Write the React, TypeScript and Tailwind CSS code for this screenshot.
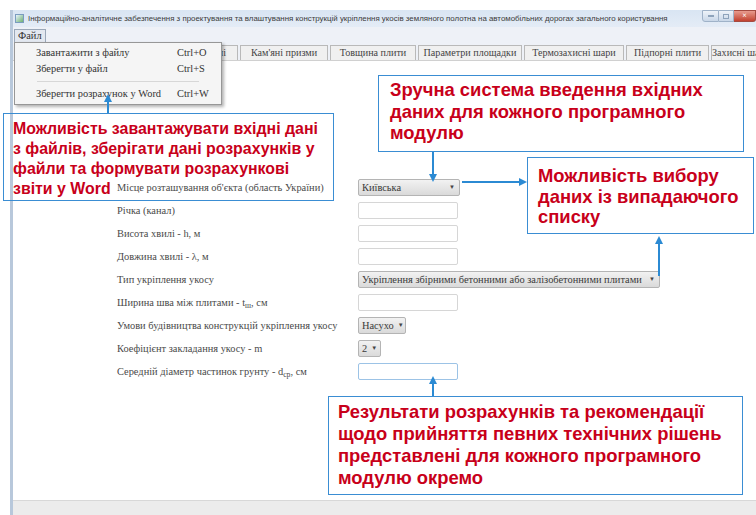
import React from "react";

type Tab = { label: string; w: string };

const tabs: Tab[] = [
  { label: "Загальні дані", w: "w-[78px]" },
  { label: "Габіони", w: "w-[56px]" },
  { label: "Геосинтетичні", w: "w-[86px]" },
  { label: "Кам'яні призми", w: "w-[88px]" },
  { label: "Товщина плити", w: "w-[86px]" },
  { label: "Параметри площадки", w: "w-[104px]" },
  { label: "Термозахисні шари", w: "w-[100px]" },
  { label: "Підпорні плити", w: "w-[83px]" },
  { label: "Захисні шари", w: "w-[60px]" },
];

const Field: React.FC<{ focused?: boolean }> = ({ focused }) => (
  <div
    className={`h-[17px] w-[100px] rounded-[2px] border bg-white ${
      focused ? "border-[#9cc3e6]" : "border-[#d6d6d6]"
    }`}
  />
);

const Combo: React.FC<{ value: string; className: string }> = ({ value, className }) => (
  <div
    className={`flex h-[17px] items-center justify-between gap-1 overflow-hidden whitespace-nowrap rounded-[2px] border border-[#b4b4b4] bg-linear-to-b from-[#f2f2f2] to-[#dadada] pl-[3px] pr-[4px] text-[10.4px] text-[#3a3a3a] ${className}`}
  >
    <span>{value}</span>
    <span className="text-[6px] text-[#444]">▼</span>
  </div>
);

const rows: { label: React.ReactNode; control: React.ReactNode }[] = [
  {
    label: "Місце розташування об'єкта (область України)",
    control: <Combo value="Київська" className="w-[102px]" />,
  },
  { label: "Річка (канал)", control: <Field /> },
  { label: "Висота хвилі - h, м", control: <Field /> },
  { label: "Довжина хвилі - λ, м", control: <Field /> },
  {
    label: "Тип укріплення укосу",
    control: (
      <Combo
        value="Укріплення збірними бетонними або залізобетонними плитами"
        className="w-[302px]"
      />
    ),
  },
  {
    label: (
      <>
        Ширина шва між плитами - t<sub>ш</sub>, см
      </>
    ),
    control: <Field />,
  },
  {
    label: "Умови будівництва конструкцій укріплення укосу",
    control: <Combo value="Насухо" className="w-[48px]" />,
  },
  {
    label: "Коефіцієнт закладання укосу - m",
    control: <Combo value="2" className="w-[23px]" />,
  },
  {
    label: (
      <>
        Середній діаметр частинок грунту - d<sub>ср</sub>, см
      </>
    ),
    control: <Field focused />,
  },
];

const menuItems = [
  { label: "Завантажити з файлу", key: "Ctrl+O" },
  { label: "Зберегти у файл", key: "Ctrl+S" },
  { label: "Зберегти розрахунок у Word", key: "Ctrl+W", sep: true },
];

const Callout: React.FC<{ className: string; lines: string[] }> = ({ className, lines }) => (
  <div
    className={`absolute border-[1.5px] border-[#3a8dd3] font-['Liberation_Sans',Arial,sans-serif] font-bold text-[#c8001a] ${className}`}
  >
    {lines.map((l) => (
      <div key={l} className="whitespace-nowrap">
        {l}
      </div>
    ))}
  </div>
);

const Arrows: React.FC = () => (
  <svg className="pointer-events-none absolute left-0 top-0" width={756} height={515}>
    <g stroke="#2b8ad3" strokeWidth={2}>
      <line x1={108} y1={113} x2={108} y2={101} />
      <line x1={433} y1={152} x2={433} y2={175} />
      <line x1={462} y1={182} x2={520} y2={182} />
      <line x1={659} y1={276} x2={659} y2={243} />
      <line x1={433} y1={396} x2={433} y2={383} />
    </g>
    <g fill="#2b8ad3">
      <polygon points="108,94 104,102 112,102" />
      <polygon points="433,182 429,174 437,174" />
      <polygon points="527,182 519,178 519,186" />
      <polygon points="659,236 655,244 663,244" />
      <polygon points="433,376 429,384 437,384" />
    </g>
  </svg>
);

export default function App() {
  return (
    <div className="relative h-[515px] w-[756px] overflow-hidden bg-white font-['Liberation_Serif',serif] text-[#4a4a4a]">
      <div className="ml-[10px] mt-[10px] flex h-[505px] flex-col border-l-[3px] border-[#b8c8db]">
        {/* title bar */}
        <div className="flex h-[17px] items-center bg-linear-to-b from-[#d9e5f3] to-[#e4ecf6] pl-[2px]">
          <div className="mr-[4px] h-[9px] w-[9px] border border-[#7a9cbf] bg-linear-to-br from-[#e8f4ff] to-[#6fb070]" />
          <span className="flex-1 truncate font-['Liberation_Sans',sans-serif] text-[7.9px] text-[#3b3b3b]">
            Інформаційно-аналітичне забезпечення з проектування та влаштування конструкцій укріплення
            укосів земляного полотна на автомобільних дорогах загального користування
          </span>
          <div className="ml-[10px] flex h-[12px] self-start">
            <div className="flex w-[17px] items-center justify-center rounded-bl-[3px] border border-[#9fb2c8] bg-linear-to-b from-[#eef3f9] to-[#c9d7e8]">
              <div className="h-[2px] w-[6px] bg-[#8ea3bb]" />
            </div>
            <div className="flex w-[15px] items-center justify-center border border-l-0 border-[#9fb2c8] bg-linear-to-b from-[#eef3f9] to-[#c9d7e8]">
              <div className="h-[5px] w-[6px] border border-[#8ea3bb]" />
            </div>
            <div className="flex w-[22px] items-center justify-center rounded-br-[3px] border border-l-0 border-[#a44a40] bg-linear-to-b from-[#e79a8e] to-[#c2402f] text-[8px] font-bold leading-none text-white">
              ×
            </div>
          </div>
        </div>

        {/* menu bar */}
        <div className="flex h-[16px] items-end bg-[#eef1f7] pl-px">
          <div className="flex h-[14px] items-center border border-[#9aa7b8] bg-[#e3e8f0] px-[3px] text-[10.4px] text-[#333]">
            Файл
          </div>
        </div>

        {/* tab strip */}
        <div className="flex h-[17px] gap-[2px] overflow-hidden bg-[#eef1f7] pl-px pt-[2px]">
          {tabs.map((t) => (
            <div
              key={t.label}
              className={`flex shrink-0 items-center justify-center overflow-hidden whitespace-nowrap border border-b-0 border-[#b9b9b9] bg-[#f0f0f0] text-[10.1px] text-[#444] ${t.w}`}
            >
              {t.label}
            </div>
          ))}
        </div>

        {/* form */}
        <div className="flex-1 border-t border-[#d0d0d0] bg-white">
          <div className="grid grid-cols-[241px_auto] auto-rows-[23px] items-center pl-[104px] pt-[115px] text-[10.4px]">
            {rows.map((r, i) => (
              <React.Fragment key={i}>
                <div className="whitespace-nowrap">{r.label}</div>
                <div>{r.control}</div>
              </React.Fragment>
            ))}
          </div>
        </div>

        {/* status bar */}
        <div className="h-[15px] border-t border-[#d8d8d8] bg-[#ececec]" />
      </div>

      {/* open File menu */}
      <div className="absolute left-[14px] top-[42px] flex w-[208px] flex-col border border-[#979797] bg-[#f5f5f5] py-[2px] text-[10.4px] text-[#333] shadow-[2px_2px_3px_rgba(0,0,0,0.3)]">
        {menuItems.map((m) => (
          <React.Fragment key={m.key}>
            {m.sep && <div className="mx-[22px] my-[4px] h-px bg-[#d7d7d7]" />}
            <div className="flex h-[16px] items-center pl-[21px]">
              <span className="w-[141px]">{m.label}</span>
              <span>{m.key}</span>
            </div>
          </React.Fragment>
        ))}
      </div>

      <Callout
        className="left-[3px] top-[113px] h-[88px] w-[331px] pl-[9px] pt-[5px] text-[15.9px] leading-[20px]"
        lines={[
          "Можливість завантажувати вхідні дані",
          "з файлів, зберігати дані розрахунків у",
          "файли та формувати розрахункові",
          "звіти у Word",
        ]}
      />
      <Callout
        className="left-[378px] top-[75px] h-[77px] w-[366px] pl-[11px] pt-[3px] text-[18.4px] leading-[21.5px]"
        lines={["Зручна система введення вхідних", "даних для кожного програмного", "модулю"]}
      />
      <Callout
        className="left-[527px] top-[157px] h-[77px] w-[227px] pl-[10px] pt-[8px] text-[18.4px] leading-[20.5px]"
        lines={["Можливість вибору", "даних із випадаючого", "списку"]}
      />
      <Callout
        className="left-[328px] top-[396px] h-[99px] w-[415px] pl-[9px] pt-[4px] text-[18.4px] leading-[22px]"
        lines={[
          "Результати розрахунків та рекомендації",
          "щодо прийняття певних технічних рішень",
          "представлені для кожного програмного",
          "модулю окремо",
        ]}
      />

      <Arrows />
    </div>
  );
}
